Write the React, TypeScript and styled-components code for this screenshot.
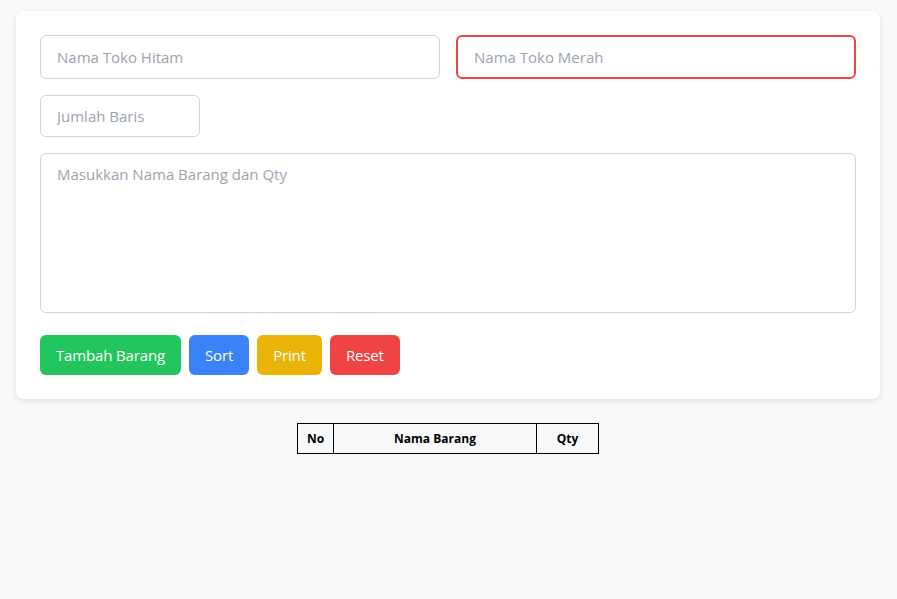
import React from "react";
import styled, { createGlobalStyle } from "styled-components";

const GlobalStyle = createGlobalStyle`
    body {
        margin: 0;
        background-color: #f8f9fb;
        font-family: "Open Sans", "Noto Sans", sans-serif;
    }
`;

const Page = styled.div`
    padding: 11px 16px 24px;
`;

const Card = styled.div`
    max-width: 864px;
    box-sizing: border-box;
    background-color: #fff;
    border-radius: 8px;
    box-shadow: 0 2px 6px rgba(0, 0, 0, 0.1);
    padding: 24px;
    display: flex;
    flex-direction: column;
    gap: 16px;
`;

const Row = styled.div`
    display: grid;
    grid-template-columns: 1fr 1fr;
    gap: 16px;
`;

const Input = styled.input<{ danger?: boolean; narrow?: boolean }>`
    box-sizing: border-box;
    height: ${(props) => (props.narrow ? "42px" : "44px")};
    width: ${(props) => (props.narrow ? "160px" : "100%")};
    padding: 0 16px;
    border: ${(props) => (props.danger ? "2px solid #ef4444" : "1px solid #d1d5db")};
    border-radius: 6px;
    font-family: inherit;
    font-size: 15px;
    color: #111827;
    outline: none;
    &::placeholder {
        color: #9ca3af;
    }
`;

const TextArea = styled.textarea`
    box-sizing: border-box;
    height: 160px;
    width: 100%;
    padding: 10px 16px;
    border: 1px solid #d1d5db;
    border-radius: 6px;
    font-family: inherit;
    font-size: 15px;
    resize: none;
    outline: none;
    &::placeholder {
        color: #9ca3af;
    }
`;

const Actions = styled.div`
    display: flex;
    gap: 8px;
    margin-top: 6px;
`;

const Btn = styled.button<{ color: string }>`
    height: 40px;
    padding: 0 16px;
    border: none;
    border-radius: 6px;
    background-color: ${(props) => props.color};
    color: #fff;
    font-family: inherit;
    font-size: 15px;
    letter-spacing: -0.15px;
    cursor: pointer;
`;

const TableWrap = styled.div`
    display: flex;
    justify-content: center;
    margin-top: 24px;
    padding-right: 1px;
`;

const Table = styled.table`
    border-collapse: collapse;
`;

const Th = styled.th<{ w: number }>`
    width: ${(props) => props.w}px;
    box-sizing: border-box;
    height: 30px;
    padding: 0;
    border: 1px solid #000;
    font-family: "Open Sans", "Noto Sans", sans-serif;
    font-size: 12px;
    font-weight: 700;
    color: #000;
`;

export default function App() {
    return (
        <>
            <GlobalStyle />
            <Page>
                <Card>
                    <Row>
                        <Input placeholder="Nama Toko Hitam" />
                        <Input danger placeholder="Nama Toko Merah" />
                    </Row>
                    <Input narrow placeholder="Jumlah Baris" />
                    <TextArea placeholder="Masukkan Nama Barang dan Qty" />
                    <Actions>
                        <Btn color="#22c55e">Tambah Barang</Btn>
                        <Btn color="#3b82f6">Sort</Btn>
                        <Btn color="#eab308">Print</Btn>
                        <Btn color="#ef4444">Reset</Btn>
                    </Actions>
                </Card>
                <TableWrap>
                    <Table>
                        <thead>
                            <tr>
                                <Th w={36}>No</Th>
                                <Th w={203}>Nama Barang</Th>
                                <Th w={62}>Qty</Th>
                            </tr>
                        </thead>
                    </Table>
                </TableWrap>
            </Page>
        </>
    );
}
